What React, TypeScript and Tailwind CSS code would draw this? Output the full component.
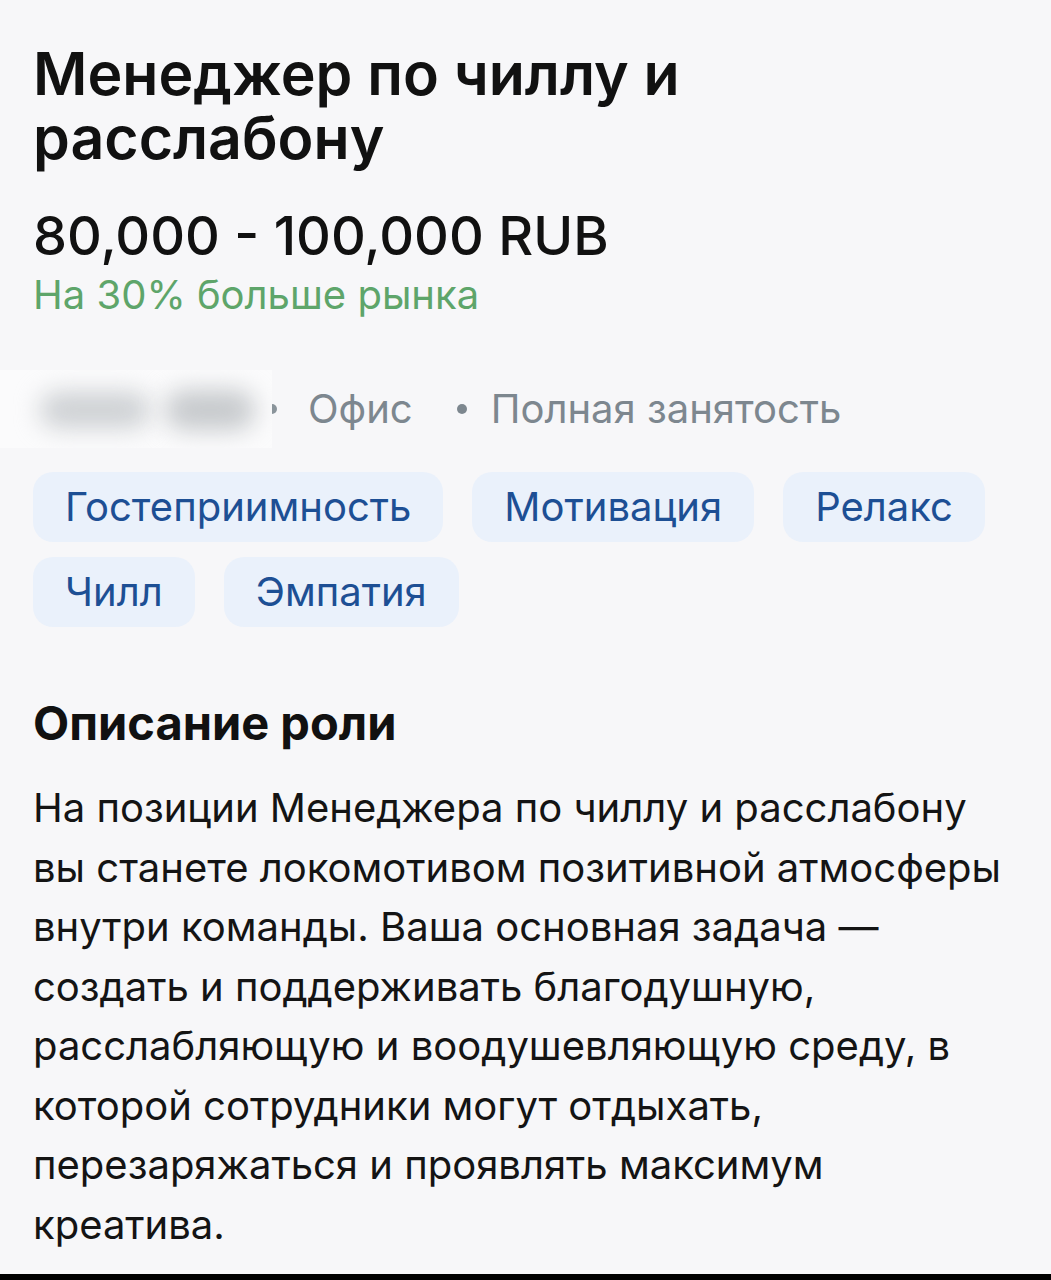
const TAGS = ['Гостеприимность', 'Мотивация', 'Релакс', 'Чилл', 'Эмпатия']

const BODY = [
  'На позиции Менеджера по чиллу и расслабону',
  'вы станете локомотивом позитивной атмосферы',
  'внутри команды. Ваша основная задача —',
  'создать и поддерживать благодушную,',
  'расслабляющую и воодушевляющую среду, в',
  'которой сотрудники могут отдыхать,',
  'перезаряжаться и проявлять максимум',
  'креатива.',
]

export default function App() {
  return (
    <div className="min-h-[1280px] w-full bg-[#f7f7f9] flex flex-col font-['Inter',sans-serif] text-[#111111]">
      <div className="flex-1 px-[33px] pt-[42px]">
        <h1 className="text-[59px] leading-[64px] font-semibold">
          Менеджер по чиллу и
          <br />
          расслабону
        </h1>

        <div className="mt-[36px] text-[54px] leading-[60px] font-medium">80,000 - 100,000 RUB</div>
        <div className="mt-[4px] text-[40px] leading-[50px] text-[#5ea56a]">На 30% больше рынка</div>

        {/* location row, city is blurred out */}
        <div className="mt-[61px] -ml-[33px] flex items-center h-[56px] text-[40px] text-[#7d878f]">
          <div className="relative w-[272px] h-[78px] bg-[#fbfbfc] overflow-hidden">
            <div className="absolute left-[40px] top-[22px] w-[110px] h-[36px] rounded-full bg-[#cdd0d3] blur-[12px]" />
            <div className="absolute left-[165px] top-[20px] w-[90px] h-[40px] rounded-full bg-[#c6c9cc] blur-[12px]" />
          </div>
          <span className="w-[5px] h-[10px] rounded-r-full bg-[#8a949b]" />
          <span className="ml-[31px]">Офис</span>
          <span className="ml-[44px] mr-[24px] w-[10px] h-[10px] rounded-full bg-[#7d878f]" />
          <span>Полная занятость</span>
        </div>

        <div className="mt-[35px] flex flex-wrap gap-x-[29px] gap-y-[15px]">
          {TAGS.map(t => (
            <div
              key={t}
              className="h-[70px] px-[32px] rounded-[20px] bg-[#eaf1fb] text-[#1d4f94] text-[40px] flex items-center"
            >
              {t}
            </div>
          ))}
        </div>

        <h2 className="mt-[71px] text-[47px] leading-[50px] font-bold">Описание роли</h2>

        <p className="mt-[30px] text-[40px] leading-[59.5px] text-[#141414] whitespace-nowrap">
          {BODY.map((line, i) => (
            <span key={i}>
              {line}
              {i < BODY.length - 1 && <br />}
            </span>
          ))}
        </p>
      </div>
      <div className="h-[6px] bg-black" />
    </div>
  )
}
